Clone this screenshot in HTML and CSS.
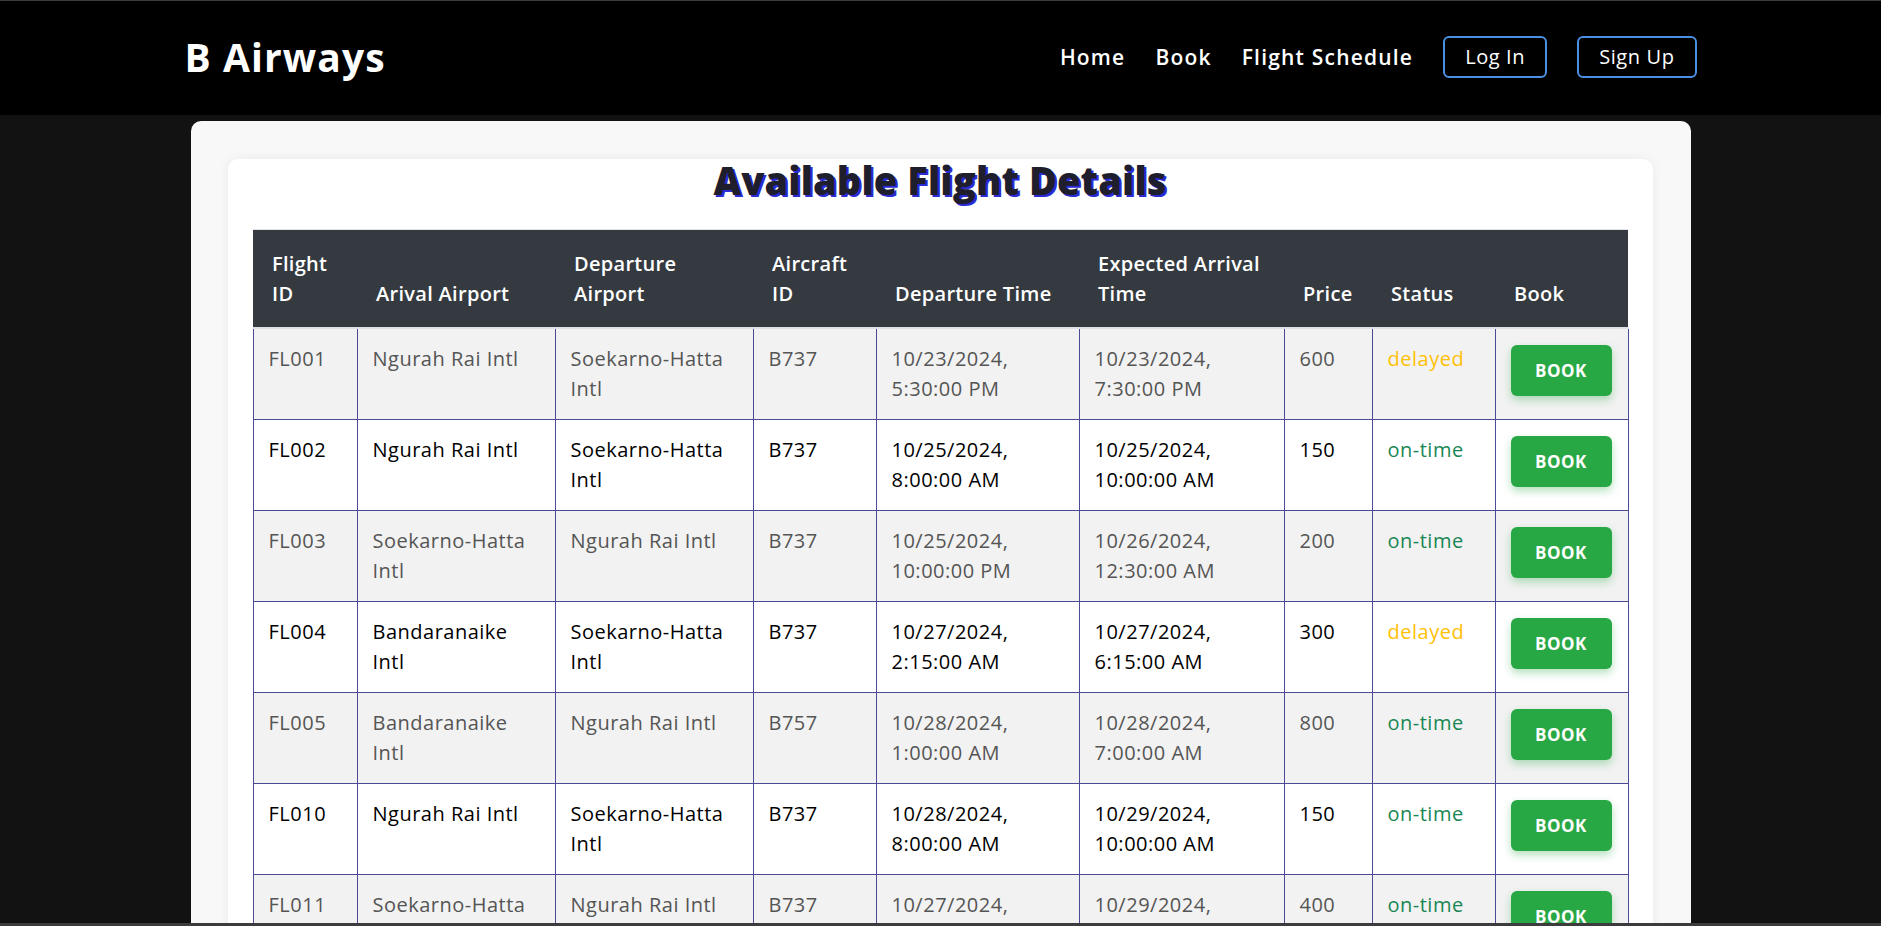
FILE: index.html
```html
<!DOCTYPE html>
<html lang="en">
<head>
<meta charset="utf-8">
<title>B Airways - Available Flight Details</title>
<link rel="stylesheet" href="styles.css">
</head>
<body>
<div class="frame"></div>
<header class="navbar">
  <div class="nav-inner">
    <div class="brand">B Airways</div>
    <nav class="nav-links">
      <a class="nav-link" href="#">Home</a>
      <a class="nav-link" href="#">Book</a>
      <a class="nav-link" href="#">Flight Schedule</a>
      <a class="nav-btn" href="#">Log In</a>
      <a class="nav-btn" href="#">Sign Up</a>
    </nav>
  </div>
</header>
<main class="outer-card">
  <section class="inner-card">
    <h1 class="title">Available Flight Details</h1>
    <table class="flights">
      <colgroup>
        <col class="c-id"><col class="c-arr"><col class="c-dep"><col class="c-ac"><col class="c-dt"><col class="c-at"><col class="c-price"><col class="c-status"><col class="c-book">
      </colgroup>
      <thead>
        <tr>
          <th>Flight ID</th>
          <th>Arival Airport</th>
          <th>Departure Airport</th>
          <th>Aircraft ID</th>
          <th>Departure Time</th>
          <th>Expected Arrival Time</th>
          <th>Price</th>
          <th>Status</th>
          <th>Book</th>
        </tr>
      </thead>
      <tbody>
        <tr>
          <td>FL001</td><td>Ngurah Rai Intl</td><td>Soekarno-Hatta Intl</td><td>B737</td>
          <td>10/23/2024, 5:30:00 PM</td><td>10/23/2024, 7:30:00 PM</td><td>600</td>
          <td class="st-delayed">delayed</td><td><button class="book-btn">BOOK</button></td>
        </tr>
        <tr>
          <td>FL002</td><td>Ngurah Rai Intl</td><td>Soekarno-Hatta Intl</td><td>B737</td>
          <td>10/25/2024, 8:00:00 AM</td><td>10/25/2024, 10:00:00 AM</td><td>150</td>
          <td class="st-ontime">on-time</td><td><button class="book-btn">BOOK</button></td>
        </tr>
        <tr>
          <td>FL003</td><td>Soekarno-Hatta Intl</td><td>Ngurah Rai Intl</td><td>B737</td>
          <td>10/25/2024, 10:00:00 PM</td><td>10/26/2024, 12:30:00 AM</td><td>200</td>
          <td class="st-ontime">on-time</td><td><button class="book-btn">BOOK</button></td>
        </tr>
        <tr>
          <td>FL004</td><td>Bandaranaike Intl</td><td>Soekarno-Hatta Intl</td><td>B737</td>
          <td>10/27/2024, 2:15:00 AM</td><td>10/27/2024, 6:15:00 AM</td><td>300</td>
          <td class="st-delayed">delayed</td><td><button class="book-btn">BOOK</button></td>
        </tr>
        <tr>
          <td>FL005</td><td>Bandaranaike Intl</td><td>Ngurah Rai Intl</td><td>B757</td>
          <td>10/28/2024, 1:00:00 AM</td><td>10/28/2024, 7:00:00 AM</td><td>800</td>
          <td class="st-ontime">on-time</td><td><button class="book-btn">BOOK</button></td>
        </tr>
        <tr>
          <td>FL010</td><td>Ngurah Rai Intl</td><td>Soekarno-Hatta Intl</td><td>B737</td>
          <td>10/28/2024, 8:00:00 AM</td><td>10/29/2024, 10:00:00 AM</td><td>150</td>
          <td class="st-ontime">on-time</td><td><button class="book-btn">BOOK</button></td>
        </tr>
        <tr>
          <td>FL011</td><td>Soekarno-Hatta Intl</td><td>Ngurah Rai Intl</td><td>B737</td>
          <td>10/27/2024, 10:00:00 PM</td><td>10/29/2024, 12:30:00 AM</td><td>400</td>
          <td class="st-ontime">on-time</td><td><button class="book-btn">BOOK</button></td>
        </tr>
      </tbody>
    </table>
  </section>
</main>
</body>
</html>
```

FILE: styles.css
```css
* { box-sizing: border-box; }

html, body {
  margin: 0;
  padding: 0;
}

body {
  background: #121212;
  font-family: "Open Sans", "Noto Sans", sans-serif;
  font-size: 20px;
  line-height: 1.5;
  color: #212529;
}

.frame {
  position: fixed;
  inset: 0;
  border-top: 1px solid #3c3c3c;
  border-bottom: 3px solid #3c3c3c;
  pointer-events: none;
  z-index: 10;
}

.navbar {
  background: #000;
  height: 115px;
  display: flex;
  align-items: center;
}

.nav-inner {
  width: 1512px;
  margin: 0 auto;
  display: flex;
  align-items: center;
  justify-content: space-between;
}

.brand {
  color: #fff;
  font-size: 39px;
  font-weight: 700;
  line-height: 1.2;
  letter-spacing: 1.1px;
}

.nav-links {
  display: flex;
  align-items: center;
  gap: 30px;
}

.nav-link {
  color: #fff;
  text-decoration: none;
  font-weight: 600;
  font-size: 21px;
  letter-spacing: 1.2px;
}

.nav-btn {
  color: #fff;
  text-decoration: none;
  font-size: 20px;
  font-weight: 400;
  letter-spacing: 0.6px;
  border: 2px solid #4a90e2;
  border-radius: 6px;
  padding: 4px 20px;
  line-height: 30px;
}

.outer-card {
  width: 1500px;
  margin: 6px auto 0;
  background: #f8f8f8;
  border-radius: 10px;
  padding: 38px 38px 40px 37px;
}

.inner-card {
  background: #fff;
  border-radius: 10px;
  box-shadow: 0 0 12px rgba(0, 0, 0, 0.06);
  padding: 0 25px 30px;
}

.title {
  margin: 0;
  text-align: center;
  font-size: 38px;
  font-weight: 800;
  line-height: 1;
  padding-top: 2px;
  color: #1e1e2d;
  text-shadow: 2px 2px 0 #2b2bd6;
  letter-spacing: 0.1px;
}

.flights {
  width: 1375px;
  margin-top: 30px;
  border-collapse: collapse;
  table-layout: fixed;
}

.c-id { width: 104px; }
.c-arr { width: 198px; }
.c-dep { width: 198px; }
.c-ac { width: 123px; }
.c-dt { width: 203px; }
.c-at { width: 205px; }
.c-price { width: 88px; }
.c-status { width: 123px; }
.c-book { width: 133px; }

.flights th {
  background: #343a40;
  color: #fff;
  font-weight: 600;
  text-align: left;
  vertical-align: bottom;
  letter-spacing: 0.3px;
  padding: 19px 12px 18px 19px;
  border-top: 1px solid #dee2e6;
  border-bottom: 2px solid #dee2e6;
}

.flights td {
  padding: 15px 15px;
  vertical-align: top;
  letter-spacing: 0.5px;
  border: 1px solid #4b4a93;
  color: #000;
}

.flights tbody tr:nth-child(odd) td {
  background: #f2f2f2;
  color: #555;
}

.flights tbody tr:nth-child(odd) td.st-delayed,
.flights td.st-delayed { color: #ffc107; }

.flights tbody tr:nth-child(odd) td.st-ontime,
.flights td.st-ontime { color: #198754; }

.book-btn {
  display: block;
  width: 101px;
  height: 51px;
  margin-top: 1px;
  background: #28a745;
  color: #fff;
  border: none;
  border-radius: 6px;
  font-family: "Open Sans", "Noto Sans", sans-serif;
  font-size: 17px;
  font-weight: 700;
  letter-spacing: 0.5px;
  box-shadow: 0 4px 8px rgba(40, 167, 69, 0.35);
  cursor: pointer;
}
```
